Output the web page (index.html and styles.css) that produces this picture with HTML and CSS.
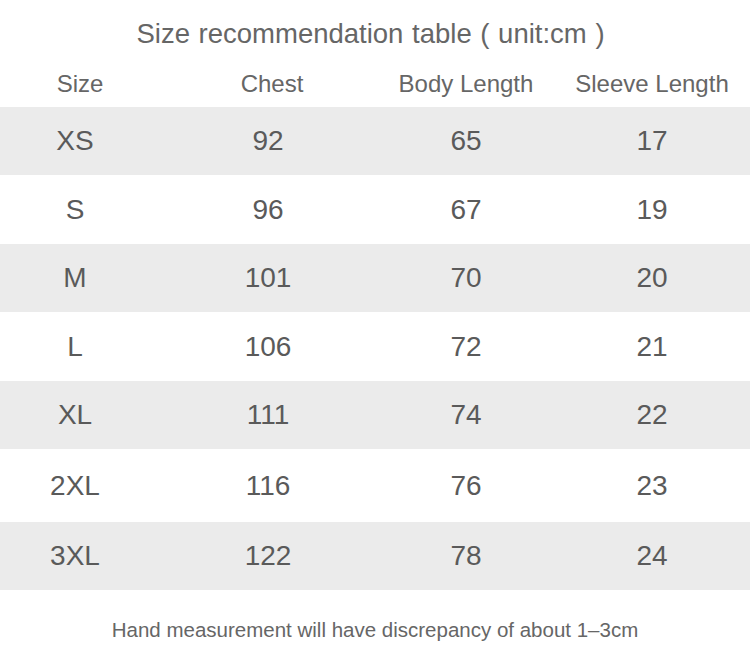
FILE: index.html
```html
<!DOCTYPE html>
<html lang="en">
<head>
<meta charset="utf-8">
<title>Size recommendation table</title>
<link rel="stylesheet" href="styles.css">
</head>
<body>
<div class="page">
  <h1 class="title">Size recommendation table ( unit:cm )</h1>
  <div class="table">
    <div class="row head">
      <div class="c c1">Size</div><div class="c c2">Chest</div><div class="c c3">Body Length</div><div class="c c4">Sleeve Length</div>
    </div>
    <div class="row gray h68"><div class="c c1">XS</div><div class="c c2">92</div><div class="c c3">65</div><div class="c c4">17</div></div>
    <div class="row h69"><div class="c c1">S</div><div class="c c2">96</div><div class="c c3">67</div><div class="c c4">19</div></div>
    <div class="row gray h68"><div class="c c1">M</div><div class="c c2">101</div><div class="c c3">70</div><div class="c c4">20</div></div>
    <div class="row h69"><div class="c c1">L</div><div class="c c2">106</div><div class="c c3">72</div><div class="c c4">21</div></div>
    <div class="row gray h68"><div class="c c1">XL</div><div class="c c2">111</div><div class="c c3">74</div><div class="c c4">22</div></div>
    <div class="row h73"><div class="c c1">2XL</div><div class="c c2">116</div><div class="c c3">76</div><div class="c c4">23</div></div>
    <div class="row gray h68"><div class="c c1">3XL</div><div class="c c2">122</div><div class="c c3">78</div><div class="c c4">24</div></div>
  </div>
  <p class="note">Hand measurement will have discrepancy of about 1–3cm</p>
</div>
</body>
</html>
```
FILE: styles.css
```css
html, body {
  margin: 0;
  padding: 0;
  background: #ffffff;
}
.page {
  width: 750px;
  height: 669px;
  font-family: "Liberation Sans", Arial, sans-serif;
  color: #5a5a5a;
  overflow: hidden;
}
.title {
  margin: 14px 0 0 0;
  padding-right: 9px;
  height: 40px;
  line-height: 40px;
  font-size: 27.5px;
  font-weight: normal;
  text-align: center;
  color: #666666;
  word-spacing: 1px;
}
.table {
  display: flex;
  flex-direction: column;
}
.row {
  display: grid;
  grid-template-columns: 150px 236px 160px 212px;
  align-items: center;
  font-size: 28px;
}
.row.head {
  height: 53px;
  font-size: 24px;
  color: #666666;
  align-items: end;
  line-height: 47px;
}
.row.head .c1 { padding-left: 10px; }
.row.head .c2 { padding-left: 8px; }
.gray { background: #ebebeb; }
.h68 { height: 68px; }
.h69 { height: 69px; }
.h73 { height: 73px; }
.c {
  text-align: center;
  white-space: nowrap;
}
.note {
  margin: 28px 0 0 0;
  line-height: 24px;
  font-size: 20.5px;
  text-align: center;
  color: #666666;
}
```
